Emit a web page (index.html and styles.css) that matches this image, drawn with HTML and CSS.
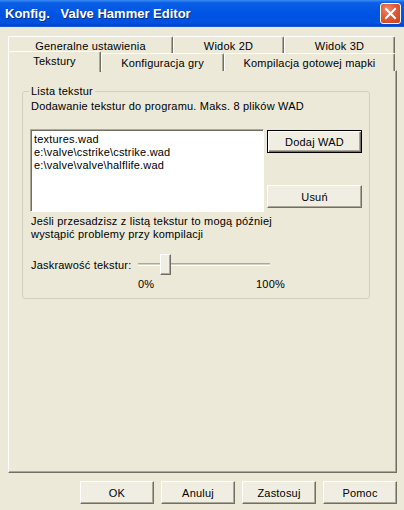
FILE: index.html
```html
<!DOCTYPE html>
<html lang="pl">
<head>
    <meta charset="UTF-8">
    <title>Konfig. Valve Hammer Editor</title>
    <link rel="stylesheet" href="styles.css">
</head>
<body>
    <div class="window">
        <div class="titlebar">
            <span class="title">Konfig.&nbsp;&nbsp; Valve Hammer Editor</span>
            <div class="close-btn">
                <svg width="13" height="13" viewBox="0 0 13 13">
                    <path d="M2 2 L11 11 M11 2 L2 11" stroke="#fff" stroke-width="2" stroke-linecap="square"/>
                </svg>
            </div>
        </div>

        <div class="content">
            <div class="tabs">
                <div class="tab-row">
                    <div class="tab tab-general">Generalne ustawienia</div>
                    <div class="tab tab-2d">Widok 2D</div>
                    <div class="tab tab-3d">Widok 3D</div>
                </div>
                <div class="tab-row front">
                    <div class="tab active tab-tex">Tekstury</div>
                    <div class="tab tab-game">Konfiguracja gry</div>
                    <div class="tab tab-compile">Kompilacja gotowej mapki</div>
                </div>
            </div>

            <div class="panel">
                <fieldset class="group">
                    <legend>Lista tekstur</legend>
                    <p class="desc">Dodawanie tekstur do programu. Maks. 8 plików WAD</p>

                    <div class="list-row">
                        <div class="listbox">
                            <div class="list-item">textures.wad</div>
                            <div class="list-item">e:\valve\cstrike\cstrike.wad</div>
                            <div class="list-item">e:\valve\valve\halflife.wad</div>
                        </div>
                        <div class="side-buttons">
                            <button class="btn btn-side default">Dodaj WAD</button>
                            <button class="btn btn-side">Usuń</button>
                        </div>
                    </div>

                    <p class="warn">Jeśli przesadzisz z listą tekstur to mogą później<br>wystąpić problemy przy kompilacji</p>

                    <div class="slider-row">
                        <span class="slider-label">Jaskrawość tekstur:</span>
                        <div class="slider">
                            <div class="track"></div>
                            <div class="thumb"></div>
                        </div>
                    </div>
                    <div class="scale">
                        <span class="scale-min">0%</span>
                        <span>100%</span>
                    </div>
                </fieldset>
            </div>

            <div class="footer">
                <button class="btn btn-footer">OK</button>
                <button class="btn btn-footer">Anuluj</button>
                <button class="btn btn-footer">Zastosuj</button>
                <button class="btn btn-footer">Pomoc</button>
            </div>
        </div>
    </div>
</body>
</html>
```

FILE: styles.css
```css
* {
    margin: 0;
    padding: 0;
    box-sizing: border-box;
}

body {
    width: 404px;
    height: 510px;
    overflow: hidden;
    background: #ece9d8;
    font-family: 'Liberation Sans', Arial, sans-serif;
    font-size: 11px;
    letter-spacing: 0.2px;
    color: #000;
}

.window {
    display: flex;
    flex-direction: column;
    height: 510px;
}

/* title bar */

.titlebar {
    height: 27px;
    display: flex;
    align-items: center;
    justify-content: space-between;
    padding: 0 3px 0 5px;
    background: linear-gradient(to bottom, #3d8ef7 0%, #0b5fe4 10%, #0055e5 45%, #0051df 85%, #0044c8 96%, #2a6fe0 100%);
}

.title {
    color: #fff;
    font-weight: bold;
    font-size: 13px;
    letter-spacing: 0;
    text-shadow: 1px 1px 0 #0a2a8a;
    white-space: pre;
}

.close-btn {
    width: 21px;
    height: 21px;
    border: 1px solid #fff;
    border-radius: 3px;
    background: radial-gradient(circle at 35% 30%, #f08a6a 0%, #e05a36 45%, #c8401c 100%);
    display: flex;
    align-items: center;
    justify-content: center;
}

.content {
    flex: 1;
    display: flex;
    flex-direction: column;
    padding: 9px 7px 0 8px;
}

/* tabs */

.tabs {
    display: flex;
    flex-direction: column;
    position: relative;
    z-index: 1;
}

.tab-row {
    display: flex;
    height: 17px;
}

.tab-row.front {
    height: 18px;
}

.tab {
    height: 100%;
    display: flex;
    align-items: center;
    justify-content: center;
    background: #ece9d8;
    border-top: 1px solid #fff;
    border-left: 1px solid #fff;
    border-right: 1px solid #716f64;
    box-shadow: inset -1px 0 0 #aca899;
    border-radius: 2px 2px 0 0;
    padding-top: 1px;
}

.tab-general { width: 165px; }
.tab-2d { width: 111px; }
.tab-3d { width: 111px; }
.tab-tex { width: 93px; }
.tab-game { width: 123px; }
.tab-compile { width: 171px; }

.tab.active {
    height: 21px;
    margin-top: -2px;
    padding-top: 0;
    padding-bottom: 3px;
}

/* panel */

.panel {
    height: 403px;
    margin-top: -1px;
    border-top: 1px solid #fff;
    border-left: 1px solid #fff;
    border-right: 1px solid #716f64;
    border-bottom: 1px solid #716f64;
    box-shadow: inset -1px -1px 0 #aca899;
    padding: 14px 0 0 13px;
}

.group {
    width: 346px;
    border: 1px solid #d0d0bf;
    border-radius: 3px;
    padding: 0 7px 7px 8px;
}

.group legend {
    padding: 0 2px;
    margin-left: -2px;
    line-height: 13px;
}

.desc {
    line-height: 13px;
    margin-top: 2px;
}

.list-row {
    display: flex;
    gap: 3px;
    margin-top: 16px;
    margin-left: -1px;
}

.listbox {
    width: 234px;
    height: 83px;
    background: #fff;
    border-top: 1px solid #aca899;
    border-left: 1px solid #aca899;
    border-right: 1px solid #fff;
    border-bottom: 1px solid #fff;
    box-shadow: inset 1px 1px 0 #716f64;
    padding: 3px 3px;
}

.list-item {
    line-height: 13px;
}

.side-buttons {
    display: flex;
    flex-direction: column;
    justify-content: space-between;
    padding: 1px 0 4px;
}

.btn {
    font-family: 'Liberation Sans', Arial, sans-serif;
    font-size: 11px;
    letter-spacing: 0.2px;
    color: #000;
    background: #f0eee3;
    border: 1px solid;
    border-color: #fff #716f64 #716f64 #fff;
    box-shadow: inset -1px -1px 0 #aca899;
}

.btn-side {
    width: 95px;
    height: 23px;
}

.btn.default {
    border: 1px solid #000;
    box-shadow: inset 1px 1px 0 #fff, inset -1px -1px 0 #716f64, inset -2px -2px 0 #aca899;
}

.warn {
    line-height: 13px;
    margin-top: 3px;
}

/* slider */

.slider-row {
    display: flex;
    align-items: center;
    height: 21px;
    margin-top: 13px;
}

.slider-label {
    width: 105px;
    padding-top: 1px;
}

.slider {
    position: relative;
    width: 136px;
    height: 21px;
    display: flex;
    align-items: center;
}

.track {
    width: 132px;
    margin-left: 2px;
    height: 3px;
    border-top: 1px solid #aca899;
    border-bottom: 1px solid #fff;
    background: #d4d0c8;
}

.thumb {
    position: absolute;
    left: 24px;
    top: 0;
    width: 11px;
    height: 21px;
    background: #f0eee3;
    border: 1px solid;
    border-color: #fff #716f64 #716f64 #fff;
    box-shadow: inset -1px -1px 0 #aca899;
}

.scale {
    display: flex;
    margin-left: 107px;
    margin-top: 3px;
    line-height: 13px;
}

.scale-min {
    width: 118px;
}

/* footer */

.footer {
    display: flex;
    justify-content: flex-end;
    gap: 7px;
    margin-top: 8px;
}

.btn-footer {
    width: 74px;
    height: 23px;
}
```
